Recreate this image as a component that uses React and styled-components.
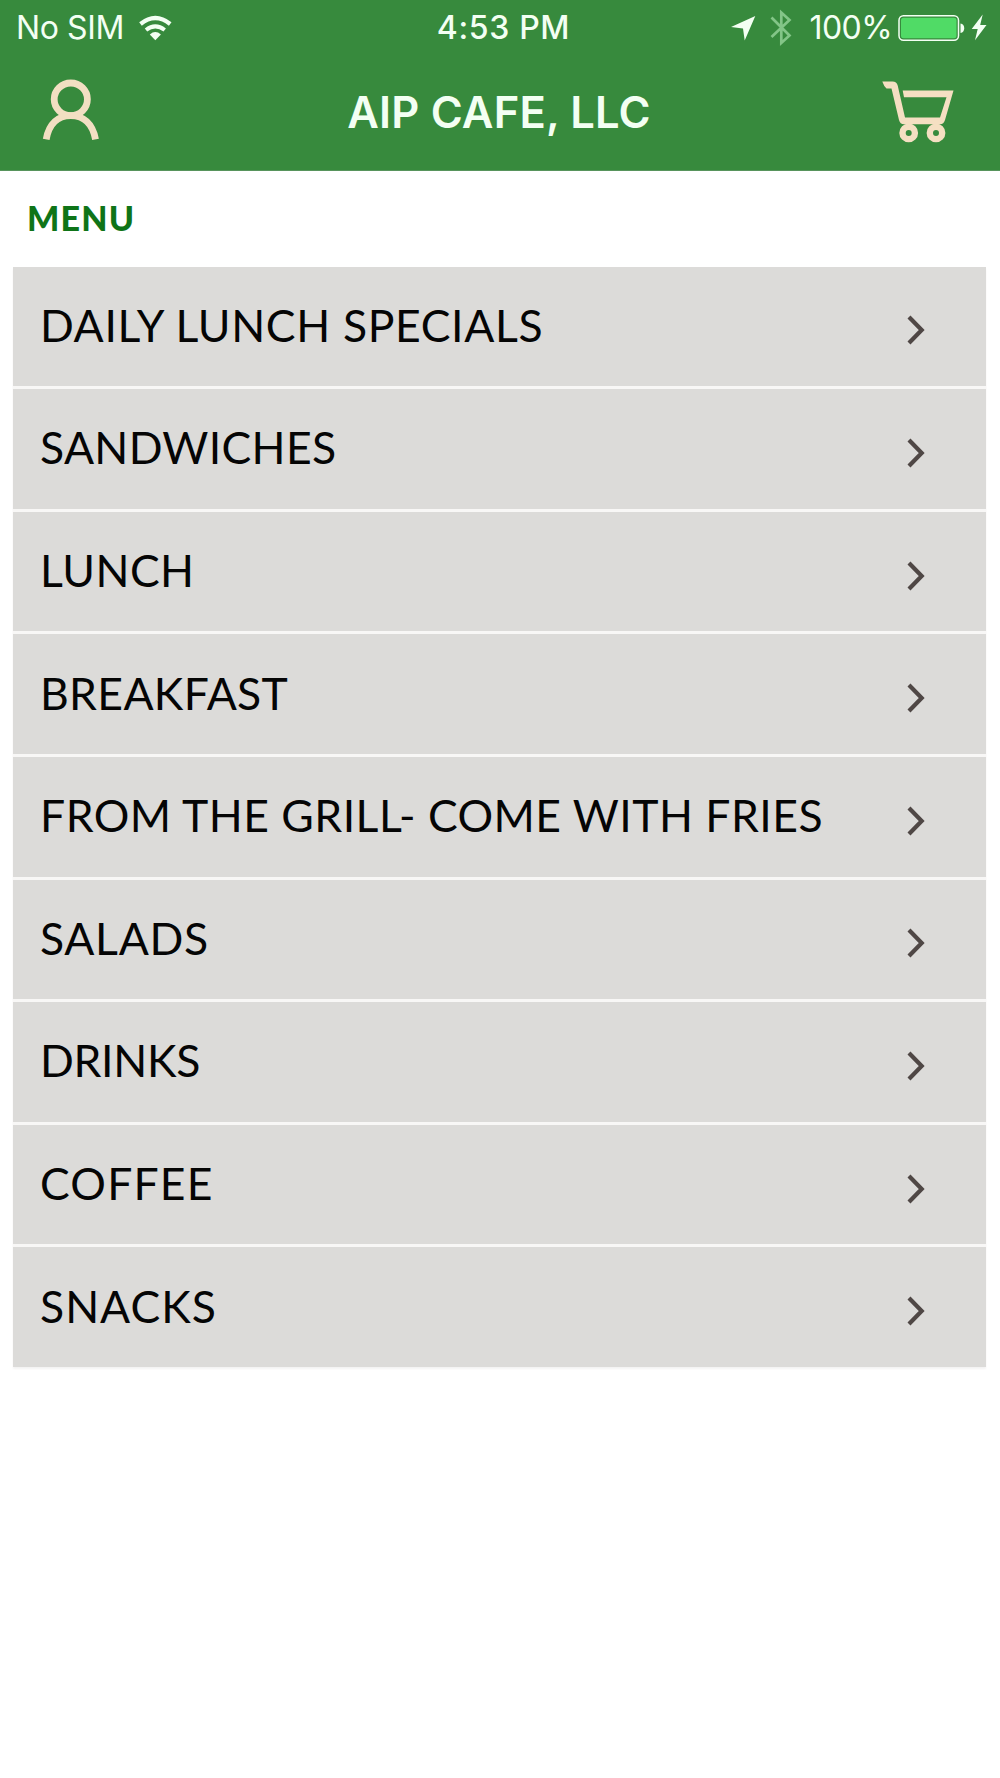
import React from "react";
import styled, { createGlobalStyle } from "styled-components";

const GlobalStyle = createGlobalStyle`
  * { box-sizing: border-box; }
  body { margin: 0; background: #fff; }
`;

const Screen = styled.div`
  width: 1000px;
  min-height: 1778px;
  background: #fff;
  font-family: Inter, "Liberation Sans", sans-serif;
`;

const Header = styled.header`
  height: 171px;
  background: #378a3d;
  border-bottom: 1px solid #57945c;
  color: #f3fff3;
`;

const StatusBar = styled.div`
  display: grid;
  grid-template-columns: 1fr auto 1fr;
  align-items: center;
  height: 55px;
  padding: 0 13px 0 16px;
`;

const StatusGroup = styled.div`
  display: flex;
  align-items: center;
  justify-content: ${(p) => (p.$end ? "flex-end" : "flex-start")};
`;

const StatusText = styled.span`
  font-size: 32px;
  line-height: 55px;
  font-weight: ${(p) => p.$weight || 400};
  letter-spacing: ${(p) => p.$spacing}px;
  margin-left: ${(p) => p.$left || 0}px;
  white-space: nowrap;
`;

const Icon = styled.svg`
  display: block;
  flex: none;
  margin-left: ${(p) => p.$left || 0}px;
`;

const NavBar = styled.div`
  display: grid;
  grid-template-columns: 1fr auto 1fr;
  align-items: center;
  height: 113px;
  padding: 0 46px 0 42px;
`;

const NavButton = styled.button`
  display: flex;
  padding: 0 0 ${(p) => p.$lift || 0}px;
  border: 0;
  background: none;
  justify-self: ${(p) => (p.$end ? "end" : "start")};
`;

const Title = styled.h1`
  margin: 0 0 0 2px;
  font-size: 43.5px;
  font-weight: 600;
  line-height: 52px;
  letter-spacing: 0.17px;
  white-space: nowrap;
`;

const SectionTitle = styled.h2`
  margin: 0;
  height: 95.6px;
  padding: 26px 27px 0;
  font-family: Lato, sans-serif;
  font-size: 34px;
  font-weight: 900;
  line-height: 41px;
  letter-spacing: 1.2px;
  color: #0f7418;
`;

const MenuList = styled.ul`
  display: flex;
  flex-direction: column;
  gap: 3px;
  list-style: none;
  margin: 0 14px 0 13px;
  padding: 0;
  background: #f8f7f6;
  box-shadow: 0 2px 2px #f4f3f3;
`;

const MenuRow = styled.li`
  display: flex;
  align-items: center;
  justify-content: space-between;
  height: 119.6px;
  padding: 0 60px 0 27px;
  background: #dcdbd9;
`;

const MenuLabel = styled.span`
  padding-bottom: 3px;
  font-family: Lato, sans-serif;
  font-size: 44.5px;
  line-height: 54px;
  letter-spacing: ${(p) => p.$spacing}px;
  color: #050505;
  white-space: nowrap;
`;

const Chevron = styled.svg`
  display: block;
  margin-top: 8px;
`;

const items = [
  ["DAILY LUNCH SPECIALS", 0.65],
  ["SANDWICHES", 0.33],
  ["LUNCH", 0.5],
  ["BREAKFAST", 0.35],
  ["FROM THE GRILL- COME WITH FRIES", 0.47],
  ["SALADS", 0.7],
  ["DRINKS", -0.3],
  ["COFFEE", 1.2],
  ["SNACKS", 1],
];

const WifiIcon = () => (
  <Icon $left={13} width="36" height="28" viewBox="137 12.500 36 28" fill="none" stroke="currentColor">
    <path d="M140.500 22.500Q155.300 10.500 170.200 22.500" strokeWidth="4.200" />
    <path d="M146 28.500Q155.300 21.300 164.700 28.500" strokeWidth="4" />
    <path d="M149.800 33Q155.300 28.200 160.900 33L155.300 38.800Z" fill="currentColor" stroke="none" />
  </Icon>
);

const LocationIcon = () => (
  <Icon width="26" height="28" viewBox="730 13.500 26 28" fill="currentColor">
    <path d="M731 26.500L755.300 15.500L744.700 40L743 28Z" />
  </Icon>
);

const BluetoothIcon = () => (
  <Icon $left={14} width="22" height="38" viewBox="770 8.500 22 38" fill="none" stroke="#83c587" strokeWidth="2.700">
    <path d="M771.500 17L789.500 35L781.300 42.500V12L789.500 19.500L771.500 36.500" />
  </Icon>
);

const BatteryIcon = () => (
  <Icon $left={6} width="67" height="28" viewBox="898 13 67 28">
    <rect x="899" y="14.700" width="59.500" height="24.600" rx="4.500" fill="none" stroke="#f3fff3" strokeWidth="1.500" />
    <rect x="901" y="16.700" width="55.500" height="20.600" rx="2.500" fill="#50db66" />
    <path d="M960.500 22.500Q964.200 23 964.200 27.200T960.500 32Z" fill="#f3fff3" />
  </Icon>
);

const BoltIcon = () => (
  <Icon $left={6} width="16" height="28" viewBox="971 13.500 16 28" fill="currentColor">
    <path d="M982.700 14L971.700 28.500H977.700L975 39.700L986.500 24.500H980.200Z" />
  </Icon>
);

const UserIcon = () => (
  <svg width="58" height="62" viewBox="42 78 58 62" fill="none" stroke="#f2dfc2" strokeWidth="6.800">
    <ellipse cx="70.800" cy="99.300" rx="16.600" ry="16.300" />
    <path d="M46.200 139.300C49 123.500 58.500 115.600 70.800 115.600S92.600 123.500 95.500 139.300" />
  </svg>
);

const CartIcon = () => (
  <svg width="72" height="62" viewBox="882 80.500 72 62" fill="none" stroke="#f5dfc2">
    <path d="M882.300 81H892.500Q896.700 81 897.700 85L905 117H940L946.500 96.700H904L902.700 90H953.500L945 119.500Q943.800 123.700 940 123.700H904Q900 123.700 899 119.500L891.500 88H886.500Q884 86 882.300 81Z" fill="#f5dfc2" stroke="none" />
    <circle cx="908.700" cy="132.400" r="6.200" strokeWidth="6.400" />
    <circle cx="936" cy="132.400" r="6.200" strokeWidth="6.400" />
  </svg>
);

export default function App() {
  return (
    <Screen>
      <GlobalStyle />
      <Header>
        <StatusBar>
          <StatusGroup>
            <StatusText $spacing={-0.4}>No SIM</StatusText>
            <WifiIcon />
          </StatusGroup>
          <StatusText $weight={500} $spacing={0.65} $left={4}>4:53 PM</StatusText>
          <StatusGroup $end>
            <LocationIcon />
            <BluetoothIcon />
            <StatusText $spacing={-0.6} $left={18}>100%</StatusText>
            <BatteryIcon />
            <BoltIcon />
          </StatusGroup>
        </StatusBar>
        <NavBar>
          <NavButton $lift={5} aria-label="Account"><UserIcon /></NavButton>
          <Title>AIP CAFE, LLC</Title>
          <NavButton $end aria-label="Cart"><CartIcon /></NavButton>
        </NavBar>
      </Header>
      <SectionTitle>MENU</SectionTitle>
      <MenuList>
        {items.map(([label, spacing]) => (
          <MenuRow key={label}>
            <MenuLabel $spacing={spacing}>{label}</MenuLabel>
            <Chevron width="20" height="32" viewBox="0 0 20 32" fill="none" stroke="#4f4745" strokeWidth="4.200">
              <path d="M3 3L15.700 16L3 29" />
            </Chevron>
          </MenuRow>
        ))}
      </MenuList>
    </Screen>
  );
}
